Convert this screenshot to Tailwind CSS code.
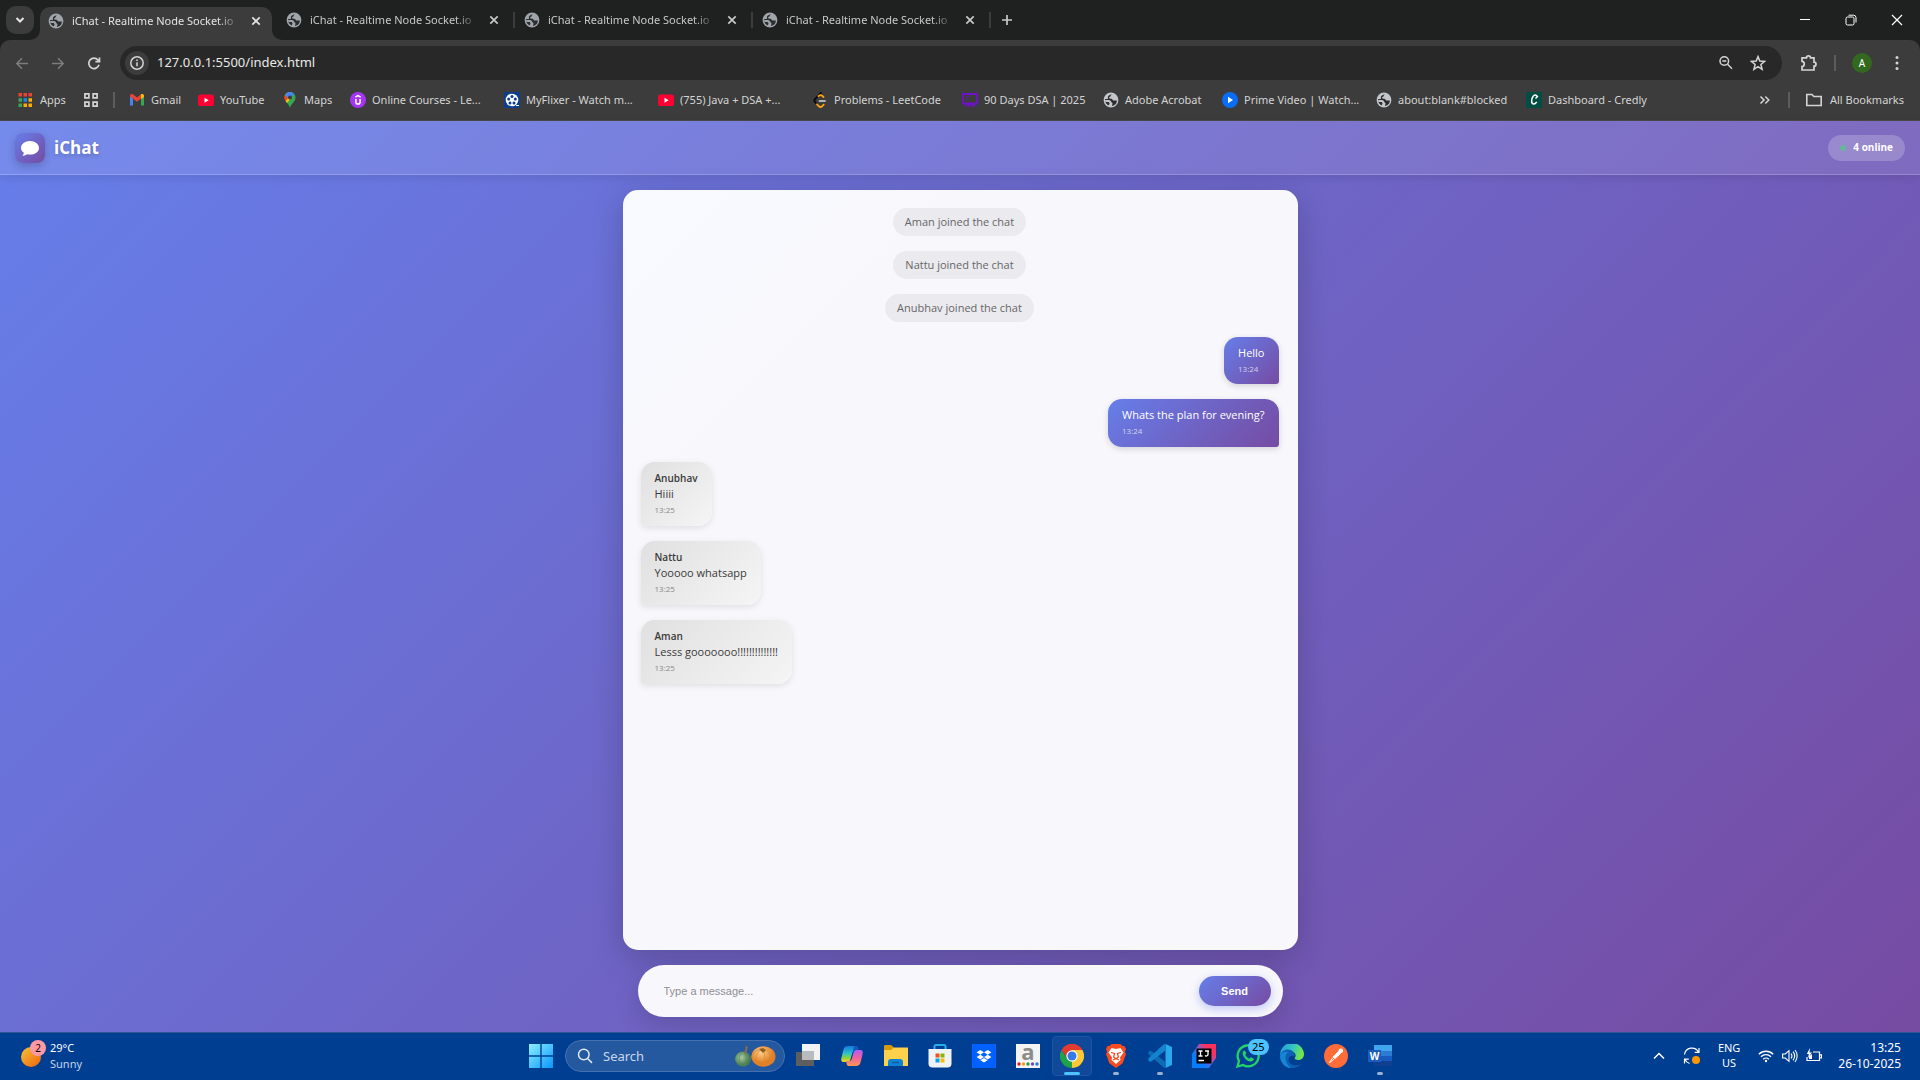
<!DOCTYPE html>
<html lang="en">
<head>
<meta charset="utf-8">
<meta name="viewport" content="width=device-width, initial-scale=1">
<title>iChat - Realtime Node Socket.io</title>
<script src="https://cdn.jsdelivr.net/npm/@tailwindcss/browser@4"></script>
</head>
<body class="flex min-h-screen flex-col overflow-x-hidden bg-[#1f2120] font-['Noto_Sans','Open_Sans',sans-serif]">

<!-- shared icons -->
<svg class="hidden" aria-hidden="true">
  <symbol id="globe" viewBox="0 0 16 16"><circle cx="8" cy="8" r="7.400" fill="currentColor"/><path d="M9.500 2.200c-1 .2-1.800.8-1.800 1.800 0 .8-1.600.6-1.600 1.700 0 1 1.200.9 2.200 1 1.500.1 1 1.700 2.400 1.700h3.200A6 6 0 0 1 9 13.900c-.2-.8.500-1.300.5-2.200 0-1.200-1.200-1-1.400-2.200C7.800 8.200 6 8 4.500 8H2.200c.1.700.3 1.400.5 2H5c1 0 1.500.7 1.500 1.500 0 .9-.7 1-.7 1.900A5.900 5.900 0 0 1 2.100 8c0-.4 0-.7.1-1l2.600.1c.6-1.200-.4-2 .5-3C6.200 3.100 7 2.700 9.500 2.200z" class="fill-[#2b2d2e]"/></symbol>
  <symbol id="close" viewBox="0 0 16 16"><path d="m4.300 4.300 7.400 7.400m0-7.400-7.400 7.400" fill="none" stroke="currentColor" stroke-width="1.700"/></symbol>
  <symbol id="youtube" viewBox="0 0 16 16"><rect y="2.500" width="16" height="11.500" rx="2.600" fill="#ff0033"/><path d="m6.500 5.700 4.200 2.500-4.200 2.500z" fill="#fff"/></symbol>
</svg>

<!-- tab strip -->
<header class="flex h-10 shrink-0 items-center text-[11px] text-[#c7c9c9]">
  <button aria-label="Search tabs" class="ml-1.5 flex size-7 items-center justify-center rounded-[10px] bg-[#3c3c3c] text-[#e6e6e6]">
    <svg class="size-3" viewBox="0 0 12 12" fill="none" stroke="currentColor" stroke-width="2"><path d="m2.500 4 3.500 3.500L9.500 4"/></svg>
  </button>
  <nav aria-label="Tabs" class="flex h-full flex-1 items-end pl-1.5">
    <div class="relative flex h-[33px] w-[232px] items-center rounded-t-[10px] bg-[#3c3c3c] pr-2 pb-[6px] pl-2 text-[#e3e3e3]">
      <svg class="absolute bottom-0 -left-2.5 size-2.5" viewBox="0 0 10 10"><path d="M10 0v10H0A10 10 0 0 0 10 0" fill="#3c3c3c"/></svg>
      <svg class="absolute -right-2.5 bottom-0 size-2.5" viewBox="0 0 10 10"><path d="M0 0v10h10A10 10 0 0 1 0 0" fill="#3c3c3c"/></svg>
      <svg class="size-4 shrink-0 text-[#9fa5ab]"><use href="#globe"/></svg>
      <a href="#" class="ml-2 w-[168px] overflow-hidden pt-px whitespace-nowrap [mask-image:linear-gradient(to_right,black_146px,transparent_168px)]">iChat - Realtime Node Socket.io</a>
      <button aria-label="Close tab" class="ml-2"><svg class="block size-4"><use href="#close"/></svg></button>
    </div>
    <div class="flex h-10 flex-1 items-center">
      <div class="flex w-[241px] items-center pl-[14px]">
        <svg class="size-4 shrink-0 text-[#9fa5ab]"><use href="#globe"/></svg>
        <a href="#" class="ml-2 w-[168px] overflow-hidden pt-px whitespace-nowrap [mask-image:linear-gradient(to_right,black_146px,transparent_168px)]">iChat - Realtime Node Socket.io</a>
        <button aria-label="Close tab" class="ml-2"><svg class="block size-4"><use href="#close"/></svg></button>
      </div>
      <div class="flex w-[238px] items-center border-[#3c3c3c]">
        <div class="h-4 w-0.5 bg-[#3c3c3c]"></div>
        <svg class="ml-[9px] size-4 shrink-0 text-[#9fa5ab]"><use href="#globe"/></svg>
        <a href="#" class="ml-2 w-[168px] overflow-hidden pt-px whitespace-nowrap [mask-image:linear-gradient(to_right,black_146px,transparent_168px)]">iChat - Realtime Node Socket.io</a>
        <button aria-label="Close tab" class="ml-2"><svg class="block size-4"><use href="#close"/></svg></button>
      </div>
      <div class="flex w-[238px] items-center">
        <div class="h-4 w-0.5 bg-[#3c3c3c]"></div>
        <svg class="ml-[9px] size-4 shrink-0 text-[#9fa5ab]"><use href="#globe"/></svg>
        <a href="#" class="ml-2 w-[168px] overflow-hidden pt-px whitespace-nowrap [mask-image:linear-gradient(to_right,black_146px,transparent_168px)]">iChat - Realtime Node Socket.io</a>
        <button aria-label="Close tab" class="ml-2"><svg class="block size-4"><use href="#close"/></svg></button>
      </div>
      <div class="h-4 w-0.5 bg-[#3c3c3c]"></div>
      <button aria-label="New tab" class="ml-2"><svg class="block size-4" viewBox="0 0 16 16" stroke="currentColor" stroke-width="1.700"><path d="M8 3v10M3 8h10"/></svg></button>
    </div>
  </nav>
  <div class="flex items-center text-white">
    <button aria-label="Minimize" class="flex w-[46px] justify-center"><svg class="size-3" viewBox="0 0 12 12" stroke="currentColor"><path d="M1 5.500h10"/></svg></button>
    <button aria-label="Restore" class="flex w-[46px] justify-center"><svg class="size-3" viewBox="0 0 12 12" fill="none" stroke="currentColor"><rect x="1" y="3" width="8" height="8" rx="1.500"/><path d="M3.500 1.200h5A2.500 2.500 0 0 1 11 3.500v5"/></svg></button>
    <button aria-label="Close window" class="flex w-[46px] justify-center"><svg class="size-3" viewBox="0 0 12 12" stroke="currentColor" stroke-width="1.200"><path d="m1 1 10 10M11 1 1 11"/></svg></button>
  </div>
</header>

<!-- address bar and bookmarks -->
<section class="flex h-[81px] shrink-0 flex-col rounded-t-[10px] border-b border-[#4b4b4b] bg-[#3c3c3c] text-[#d4d4d4]">
  <div class="flex h-[46px] items-center">
    <div class="flex w-[120px] items-center gap-5 pl-[14px]">
      <button aria-label="Back" class="text-[#7d7d7d]"><svg class="block size-4" viewBox="0 0 16 16" fill="none" stroke="currentColor" stroke-width="1.500"><path d="M14 8.500H3M8 3.200 2.800 8.500 8 13.800"/></svg></button>
      <button aria-label="Forward" class="text-[#7d7d7d]"><svg class="block size-4" viewBox="0 0 16 16" fill="none" stroke="currentColor" stroke-width="1.500"><path d="M2 8.500h11M8 3.200 13.200 8.500 8 13.800"/></svg></button>
      <button aria-label="Reload"><svg class="block size-4" viewBox="0 0 16 16" fill="none" stroke="currentColor" stroke-width="1.700"><path d="M13 9.800A5.200 5.200 0 1 1 12 5L13.300 6.500M13.500 2.600V6.700H9.400"/></svg></button>
    </div>
    <div class="flex h-[34px] flex-1 items-center rounded-full bg-[#282828] pr-4 pl-[5px]">
      <button aria-label="Site information" class="flex size-6 items-center justify-center rounded-full bg-[#3c3c3c]"><svg class="size-4" viewBox="0 0 16 16" fill="none" stroke="currentColor" stroke-width="1.500"><circle cx="8" cy="8" r="6.200"/><path d="M8 7.300v4M8 4.500v1.500"/></svg></button>
      <input aria-label="Address" value="127.0.0.1:5500/index.html" class="ml-2 min-w-0 flex-1 bg-transparent text-[13px] text-[#e8e8e8] outline-none">
      <button aria-label="Zoom" class="mr-4"><svg class="block size-4" viewBox="0 0 16 16" fill="none" stroke="currentColor" stroke-width="1.500"><circle cx="6.300" cy="6" r="4.300"/><path d="M9.600 9.300 14 13.700M4.300 6h4"/></svg></button>
      <button aria-label="Bookmark this page"><svg class="block size-4" viewBox="0 0 16 16" fill="none" stroke="currentColor" stroke-width="1.500"><path d="m8 1.600 1.800 4.500 4.800.3-3.700 3.100 1.200 4.800L8 11.700l-4.100 2.600 1.200-4.800L1.400 6.400l4.800-.3z"/></svg></button>
    </div>
    <div class="flex w-[138px] items-center pl-[18px]">
      <button aria-label="Extensions"><svg class="block size-[18px]" viewBox="0 0 18 18" fill="none" stroke="currentColor" stroke-width="1.700"><path d="M2 3.800h4.500a2 2 0 0 1 4 0H14v4.400a2 2 0 0 1 0 4V16H2v-3.500c3-.2 3-5 0-5.200z"/></svg></button>
      <div class="mx-4 h-4 w-0.5 bg-[#5c5c5c]"></div>
      <button aria-label="Profile" class="flex size-5 items-center justify-center rounded-full bg-[#33691e] text-[10px] text-white">A</button>
      <button aria-label="Menu" class="ml-[17px]"><svg class="block size-4" viewBox="0 0 16 16" fill="currentColor"><circle cx="8" cy="2.500" r="1.500"/><circle cx="8" cy="8" r="1.500"/><circle cx="8" cy="13.500" r="1.500"/></svg></button>
    </div>
  </div>
  <nav aria-label="Bookmarks" class="flex h-7 items-center text-[11px] whitespace-nowrap">
    <a href="#" class="flex w-[83px] items-center gap-2 pl-[18px]">
      <svg class="size-[14px] shrink-0" viewBox="0 0 14 14"><path d="M.5 0h3.500v3.500H.5zM5.500 0H9v3.500H5.500zM10.500 0H14v3.500h-3.500z" fill="#ea4335"/><path d="M.5 5.200H4v3.500H.5zM.5 10.500H4V14H.5z" fill="#34a853"/><path d="M5.500 5.200H9v3.500H5.500z" fill="#1a86fb"/><path d="M10.500 5.200H14v3.500h-3.500zM5.500 10.500H9V14H5.500zM10.500 10.500H14V14h-3.500z" fill="#fbaf04"/></svg>Apps</a>
    <button aria-label="Tab groups" class="flex w-[30px]"><svg class="size-4" viewBox="0 0 16 16" fill="none" stroke="currentColor" stroke-width="1.700"><path d="M1.900 1.900h4v4h-4zM10.100 1.900h4v4h-4zM1.900 10.100h4v4h-4zM10.100 10.100h4v4h-4z"/></svg></button>
    <div class="mr-[14px] h-4 w-0.5 bg-[#5c5c5c]"></div>
    <a href="#" class="flex w-[69px] items-center gap-1.5"><svg class="size-4 shrink-0" viewBox="0 0 16 16"><path d="M1 3v10.500h3V7z" fill="#4285f4"/><path d="M15 3v10.500h-3V7z" fill="#34a853"/><path d="M1 3.500C1 2 3 1.500 4 2.300L8 5.500l4-3.200v4.200L8 9.800 1 4.500z" fill="#ea4335"/><path d="M12 2.300c1-.8 3-.3 3 1.200V5l-3 2.300z" fill="#fbbc04"/></svg>Gmail</a>
    <a href="#" class="flex w-[84px] items-center gap-1.5"><svg class="size-4 shrink-0"><use href="#youtube"/></svg>YouTube</a>
    <a href="#" class="flex w-[68px] items-center gap-1.5"><svg class="size-4 shrink-0" viewBox="0 0 16 16"><path d="M8 0a5.500 5.500 0 0 1 5.500 5.500C13.500 9.500 9.500 11 8 16 6.500 11 2.500 9.500 2.500 5.500A5.500 5.500 0 0 1 8 0" fill="#34a853"/><path d="M2.900 3.500 6 6.500 3.600 9a5.500 5.500 0 0 1-.7-5.500" fill="#ea4335"/><path d="M3.600 9 10.500 1A5.500 5.500 0 0 0 3 3.300L8 7.500 5 11z" fill="#fbbc04"/><path d="M3 3.300A5.500 5.500 0 0 1 12.200 2L8 7 6 5.500z" fill="#4285f4"/><path d="m3 3.300 3 2.500-2.700 3A5.500 5.500 0 0 1 3 3.300" fill="#ea4335"/><circle cx="8" cy="5.500" r="2" fill="#3c3c3c"/></svg>Maps</a>
    <a href="#" class="flex w-[154px] items-center gap-1.5"><svg class="size-4 shrink-0" viewBox="0 0 16 16"><circle cx="8" cy="8" r="8" fill="#a435f0"/><path d="M5.900 7v3a2.100 2.100 0 0 0 4.200 0V7M5.300 5.200 8 3.600l2.700 1.600" fill="none" stroke="#fff" stroke-width="1.500"/></svg>Online Courses - Le...</a>
    <a href="#" class="flex w-[154px] items-center gap-1.5"><svg class="size-4 shrink-0" viewBox="0 0 16 16"><path d="M0 0h16v16H0z" fill="#0b3f8c"/><circle cx="8" cy="8" r="6.300" fill="#fff"/><path d="M12 13.500h3" stroke="#fff"/><g fill="#0b3f8c"><circle cx="8" cy="4.500" r="1.500"/><circle cx="4.700" cy="7" r="1.500"/><circle cx="11.300" cy="7" r="1.500"/><circle cx="6" cy="11" r="1.500"/><circle cx="10" cy="11" r="1.500"/></g></svg>MyFlixer - Watch m...</a>
    <a href="#" class="flex w-[154px] items-center gap-1.5"><svg class="size-4 shrink-0"><use href="#youtube"/></svg>(755) Java + DSA +...</a>
    <a href="#" class="flex w-[150px] items-center gap-1.5"><svg class="size-4 shrink-0" viewBox="0 0 16 16" fill="none" stroke-width="1.800" stroke-linecap="round"><path d="M9 1 3 7.200a2 2 0 0 0 0 2.800l2 2.300" stroke="#080808"/><path d="M6.500 4.200C8 2.800 9 2.800 10 3.700L11.500 5M5 12.300l2 2c1 1 2 1 3 0l1.700-1.700" stroke="#ffa116"/><path d="M7.500 9H13" stroke="#b3b3b3"/></svg>Problems - LeetCode</a>
    <a href="#" class="flex w-[141px] items-center gap-1.5"><svg class="size-4 shrink-0" viewBox="0 0 16 16" fill="none" stroke="#6f12c9" stroke-width="1.800"><path d="M1 2h14v9.500H1zM5 12l-1.500 3M11 12l1.500 3M7 12v2.500M9.500 12v2.500M0 2h16"/><path d="M4 4.800h1.500M4 7.500h1.500M7 5h1" stroke-width="1.200"/></svg>90 Days DSA | 2025</a>
    <a href="#" class="flex w-[119px] items-center gap-1.5"><svg class="size-4 shrink-0 text-[#c4c7c9]"><use href="#globe"/></svg>Adobe Acrobat</a>
    <a href="#" class="flex w-[154px] items-center gap-1.5"><svg class="size-4 shrink-0" viewBox="0 0 16 16"><circle cx="8" cy="8" r="8" fill="#0b6cf5"/><path d="m6 4.800 5 3.200-5 3.200z" fill="#fff"/></svg>Prime Video | Watch...</a>
    <a href="#" class="flex w-[150px] items-center gap-1.5"><svg class="size-4 shrink-0 text-[#c4c7c9]"><use href="#globe"/></svg>about:blank#blocked</a>
    <a href="#" class="flex items-center gap-1.5"><svg class="size-4 shrink-0" viewBox="0 0 16 16"><path d="M0 0h16v16H0z" fill="#004d43"/><path d="M11 5.500c.5-2.500-2-3.200-3.600-1.500-2.300 2.500-2.500 8 .3 8 1.300 0 2.300-1 3-2.200M9.500 6.500 12 4" fill="none" stroke="#fff" stroke-width="1.500"/></svg>Dashboard - Credly</a>
    <button aria-label="More bookmarks" class="ml-auto"><svg class="block size-4" viewBox="0 0 16 16" fill="none" stroke="currentColor" stroke-width="1.500"><path d="m3.500 4.500 3.500 3.500-3.500 3.500M8.300 4.500 11.800 8l-3.500 3.500"/></svg></button>
    <div class="mr-4 ml-[15px] h-4 w-0.5 bg-[#5c5c5c]"></div>
    <a href="#" class="flex items-center gap-2 pr-4"><svg class="size-4" viewBox="0 0 16 16" fill="none" stroke="currentColor" stroke-width="1.600"><path d="M.8 2.500h5.200l1.800 2h7.400v9H.8z"/></svg>All Bookmarks</a>
  </nav>
</section>

<!-- chat application -->
<div class="flex flex-1 flex-col bg-linear-[135deg,#667eea,#764ba2] font-['Open_Sans','Noto_Sans',sans-serif]">
  <div class="flex h-[54px] shrink-0 items-center border-b border-white/20 bg-white/10 px-[15px] shadow-[0_2px_10px_rgba(0,0,0,0.1)]">
    <div class="flex size-[30px] items-center justify-center rounded-lg bg-linear-[135deg,#667eea,#764ba2] shadow-[0_3px_8px_rgba(0,0,0,0.2)]">
      <svg class="size-5" viewBox="0 0 20 20" fill="#fff"><path d="M10 3c5 0 9 3 9 7s-4 6.600-9 6.600c-1 0-2-.1-2.900-.4-1 .8-2.600 1.600-4.600 1.600.8-.9 1.300-2 1.400-3C2 13.500 1 11.900 1 10c0-4 4-7 9-7"/></svg>
    </div>
    <h1 class="ml-[9px] text-[17px] font-bold text-white [text-shadow:0_2px_4px_rgba(0,0,0,0.2)]">iChat</h1>
    <div class="ml-auto flex h-[26px] items-center gap-[7px] rounded-full bg-white/20 px-3 text-[10px] font-bold text-white"><span class="size-1.5 rounded-full bg-[#69b598]"></span>4 online</div>
  </div>

  <main class="mx-auto flex w-full max-w-[675px] flex-1 flex-col gap-[15px] py-[15px]">
    <section aria-label="Messages" class="flex flex-1 flex-col items-start gap-[15px] rounded-[15px] bg-linear-[135deg,#f7faff,#f8f7fc_25%,#f8f7fc] py-[18px] pr-[19px] pl-[18px] text-[11px] leading-[16px] text-[#3a3a3a] shadow-[0_8px_32px_rgba(0,0,0,0.2)]">
      <p class="flex h-7 items-center self-center rounded-[14px] bg-black/5 px-3 text-[#666]">Aman joined the chat</p>
      <p class="flex h-7 items-center self-center rounded-[14px] bg-black/5 px-3 text-[#666]">Nattu joined the chat</p>
      <p class="flex h-7 items-center self-center rounded-[14px] bg-black/5 px-3 text-[#666]">Anubhav joined the chat</p>
      <article class="self-end rounded-[14px] rounded-br-[3px] bg-linear-[135deg,#667eea,#764ba2] px-[14px] pt-2 pb-[7px] text-white shadow-[0_2px_6px_rgba(0,0,0,0.15)]"><p>Hello</p><time class="block text-[8px] text-white/70">13:24</time></article>
      <article class="self-end rounded-[14px] rounded-br-[3px] bg-linear-[135deg,#667eea,#764ba2] px-[14px] py-2 text-white shadow-[0_2px_6px_rgba(0,0,0,0.15)]"><p>Whats the plan for evening?</p><time class="block text-[8px] text-white/70">13:24</time></article>
      <article class="rounded-[14px] rounded-bl-[3px] bg-linear-[135deg,#e0e0e0,#f5f5f5] px-[14px] py-2 shadow-[0_2px_6px_rgba(0,0,0,0.1)]"><h2 class="text-[10px] font-semibold">Anubhav</h2><p>Hiiii</p><time class="block text-[8px] text-[#888]">13:25</time></article>
      <article class="rounded-[14px] rounded-bl-[3px] bg-linear-[135deg,#e0e0e0,#f5f5f5] px-[14px] py-2 shadow-[0_2px_6px_rgba(0,0,0,0.1)]"><h2 class="text-[10px] font-semibold">Nattu</h2><p>Yooooo whatsapp</p><time class="block text-[8px] text-[#888]">13:25</time></article>
      <article class="rounded-[14px] rounded-bl-[3px] bg-linear-[135deg,#e0e0e0,#f5f5f5] px-[14px] py-2 shadow-[0_2px_6px_rgba(0,0,0,0.1)]"><h2 class="text-[10px] font-semibold">Aman</h2><p>Lesss gooooooo!!!!!!!!!!!!!!</p><time class="block text-[8px] text-[#888]">13:25</time></article>
    </section>
    <form class="mx-[15px] flex h-[52px] shrink-0 items-center rounded-full bg-[#f8f7fc] pr-3 pl-[26px] shadow-[0_8px_24px_rgba(0,0,0,0.15)]">
      <input aria-label="Message" placeholder="Type a message..." class="min-w-0 flex-1 bg-transparent font-['Liberation_Sans',sans-serif] text-[11px] outline-none placeholder:text-[#8e8e93]">
      <button type="button" class="h-[30px] w-[72px] rounded-full bg-linear-[135deg,#667eea,#764ba2] font-['Liberation_Sans',sans-serif] text-[11px] font-bold text-white shadow-[0_3px_10px_rgba(102,126,234,0.4)]">Send</button>
    </form>
  </main>
</div>

<!-- taskbar -->
<footer class="grid h-12 shrink-0 grid-cols-[1fr_auto_1fr] items-center border-t border-[#2e5693] bg-[#003e92] pb-px text-[11px] leading-4 text-white">
  <div class="flex items-center pl-[19px]">
    <div class="relative size-6"><svg class="mt-[3px] ml-0.5 size-5" viewBox="0 0 20 20"><defs><linearGradient id="sun" x2="1" y2="1"><stop stop-color="#f6c33a"/><stop offset="1" stop-color="#f0620d"/></linearGradient></defs><circle cx="10" cy="10" r="10" fill="url(#sun)"/></svg><span class="absolute -top-1 left-[11px] flex size-4 items-center justify-center rounded-full bg-[#ff99a4] text-[10px] text-black">2</span></div>
    <p class="ml-[7px]">29°C<br><span class="text-[#c5d3e8]">Sunny</span></p>
  </div>

  <div class="flex items-center pl-[9px]">
    <button aria-label="Start" class="mr-3"><svg class="block size-6" viewBox="0 0 24 24"><defs><linearGradient id="win" x2="1" y2="1"><stop stop-color="#8af0ff"/><stop offset="1" stop-color="#0a95fb"/></linearGradient></defs><path d="M0 0h11.300v11.300H0zM12.700 0H24v11.300H12.700zM0 12.700h11.300V24H0zM12.700 12.700H24V24H12.700z" fill="url(#win)"/></svg></button>
    <label class="mr-[3px] flex h-8 w-[220px] items-center rounded-full border border-[#4470b0] bg-[#2459a0] pl-[11px]">
      <svg class="size-4 shrink-0" viewBox="0 0 16 16" fill="none" stroke="#dfe8f5" stroke-width="1.500"><circle cx="6.800" cy="6.500" r="5.300"/><path d="m10.600 10.500 4.400 4.400"/></svg>
      <input aria-label="Search" placeholder="Search" class="ml-2.5 w-32 min-w-0 flex-1 bg-transparent text-[13px] outline-none placeholder:text-[#c8d6ea]">
      <svg class="mr-2 h-[22px] w-[42px] shrink-0" viewBox="0 0 42 22"><defs><radialGradient id="pumpkin" cx=".4" cy=".3"><stop stop-color="#ffd28a"/><stop offset="1" stop-color="#e07f26"/></radialGradient><radialGradient id="gourd" cx=".4" cy=".4"><stop stop-color="#a9cba4"/><stop offset="1" stop-color="#4a7d52"/></radialGradient></defs><ellipse cx="9" cy="14" rx="8" ry="7.500" fill="url(#gourd)"/><path d="M10 8c1-2 1-4 2-7l2 .5c-1 3-1 5-2 7.500z" fill="#8b6a4e"/><path d="M8 7c-4 4-3 11 0 14M10 7c3 4 3 11 0 14" fill="none" stroke="#5a8f5f" stroke-width=".7"/><ellipse cx="29.500" cy="11.500" rx="12" ry="10.300" fill="url(#pumpkin)"/><path d="M27 5c-6 3-6 12-1 16M30 6c1 5 1 11 0 15M32 5c5 3 6 12 1 16M25 5c-5 1-8 5-7 9" fill="none" stroke="#de8631" stroke-width=".7"/><path d="m25 4 4-1 3 2-3 3z" fill="#8f5c24"/></svg>
    </label>
    <!-- task view -->
    <button aria-label="Task View" class="flex size-10 items-center justify-center"><svg class="size-6" viewBox="0 0 24 24"><path d="M0 8h18v14H0z" fill="#5e5e5e"/><path d="M6 0h18v16H6z" fill="#f1f3f5"/><path d="M6 7h12v9H6z" fill="#b9bcbf"/></svg></button>
    <!-- copilot -->
    <button aria-label="Copilot" class="ml-1 flex size-10 items-center justify-center"><svg class="size-6" viewBox="0 0 24 24"><defs><linearGradient id="cp1" x2="0" y2="1"><stop stop-color="#1479dc"/><stop offset=".45" stop-color="#2ac2cf"/><stop offset=".75" stop-color="#8fd43c"/><stop offset="1" stop-color="#ffd02a"/></linearGradient><linearGradient id="cp2" x2="0" y2="1"><stop stop-color="#b15cf5"/><stop offset=".5" stop-color="#f261a0"/><stop offset="1" stop-color="#ff9a50"/></linearGradient></defs><path d="M8 2h7c2 0 2 1 2.500 2.500L18 7h-3c-2 0-2.500 1-3 3l-1.500 5c-.5 2-1.500 3-3.500 3H4c-3 0-3-2-2.500-4.500l2-8C4 3.500 5.500 2 8 2" fill="url(#cp1)"/><path d="M14 2h2c1 0 2 1 2.300 2.500L19 7h-3c-2 0-2.500 1-3 3l-1 2z" fill="#1357c2"/><path d="M16 22H9c-2 0-2-1-2.500-2.500L6 17h3c2 0 2.500-1 3-3l1.500-5c.5-2 1.500-3 3.500-3h3c3 0 3 2 2.500 4.500l-2 8C20 20.500 18.500 22 16 22" fill="url(#cp2)"/></svg></button>
    <!-- explorer -->
    <button aria-label="File Explorer" class="ml-1 flex size-10 items-center justify-center"><svg class="size-6" viewBox="0 0 24 24"><path d="M0 2.500C0 1.500.5 1 1.500 1H7l3 2.500V7H0z" fill="#d89b08"/><path d="M0 6h7l3-2.500h14V22H0z" fill="#ffd04b"/><path d="M4 22v-4a3 3 0 0 1 3-3h9a3 3 0 0 1 3 3v4z" fill="#0b84d8"/><path d="M8 18.500h7" stroke="#0c5e9e" stroke-width="1.500"/></svg></button>
    <!-- store -->
    <button aria-label="Microsoft Store" class="ml-1 flex size-10 items-center justify-center"><svg class="size-6" viewBox="0 0 24 24"><path d="M6.500 7V2.500C6.500 1.500 7 1 8 1h8c1 0 1.500.5 1.500 1.500V7" fill="none" stroke="#24aef0" stroke-width="2"/><path d="M.5 5h23v14.500a4 4 0 0 1-4 4h-15a4 4 0 0 1-4-4z" fill="#eff3f6"/><path d="M7.500 9.500h4v4h-4z" fill="#f25022"/><path d="M12.500 9.500h4v4h-4z" fill="#7fba00"/><path d="M7.500 14.500h4v4h-4z" fill="#00a4ef"/><path d="M12.500 14.500h4v4h-4z" fill="#ffb900"/></svg></button>
    <!-- dropbox -->
    <button aria-label="Dropbox" class="ml-1 flex size-10 items-center justify-center"><svg class="size-6" viewBox="0 0 24 24"><path d="M0 0h24v24H0z" fill="#0061fe"/><path d="m8.300 6 3.700 2.300-3.700 2.400-3.700-2.400zM15.700 6l3.700 2.300-3.700 2.400L12 8.300zM8.300 10.700l3.700 2.300-3.700 2.400L4.600 13zM15.700 10.700l3.700 2.300-3.700 2.400L12 13zM12 14l3.600 2.300L12 18.500l-3.600-2.200z" fill="#fff"/></svg></button>
    <!-- amazon -->
    <button aria-label="Amazon" class="ml-1 flex size-10 items-center justify-center"><svg class="size-6 overflow-visible" viewBox="0 0 24 24"><path d="M0 0h24v24H0z" fill="#f4f4f4"/><text x="12" y="15.500" text-anchor="middle" font-family="Open Sans, sans-serif" font-size="22" font-weight="700" fill="#8b8b8b">a</text><circle cx="3" cy="20" r="1.700" fill="#e21b2d"/><circle cx="7.500" cy="20" r="1.700" fill="#f59a1b"/><circle cx="12" cy="20" r="1.700" fill="#21a24a"/><circle cx="16.500" cy="20" r="1.700" fill="#8140c0"/><circle cx="21" cy="20" r="1.700" fill="#1c7fd6"/></svg></button>
    <!-- chrome -->
    <button aria-label="Chrome" class="relative ml-1 flex size-10 items-center justify-center rounded border border-[#1d539f] bg-[#11499a]"><svg class="size-6" viewBox="0 0 24 24"><path d="M12 12 1.600 6A12 12 0 0 1 22.400 6z" fill="#e33b2e"/><path d="M12 12 22.400 6A12 12 0 0 1 12 24z" fill="#fcc934"/><path d="M12 24A12 12 0 0 1 1.600 6l5.600 9 6 3z" fill="#1ea446"/><path d="M12 6h10.400L17 15l-5 9z" fill="#fcc934"/><path d="M1.600 6A12 12 0 0 1 22.400 6H12L7 14z" fill="#e33b2e"/><circle cx="12" cy="12" r="5.700" fill="#fff"/><circle cx="12" cy="12" r="4.500" fill="#357ae8"/></svg><span class="absolute bottom-0 h-[3px] w-4 rounded-full bg-[#4cc2ff]"></span></button>
    <!-- brave -->
    <button aria-label="Brave" class="relative ml-1 flex size-10 items-center justify-center"><svg class="size-6" viewBox="0 0 24 24"><path d="m7.500 0h9l2 2h2L22 5l-1 3 1 2-3.500 9.500L12 24l-6.500-4.500L2 10l1-2-1-3 1.500-3h2z" fill="#fb4a1d"/><path d="m7.500 4 4.500 1 4.500-1 3 4.500-3.500 5 .5 2.500-4.500 4-4.500-4 .5-2.500-3.500-5z" fill="#fff"/><path d="m7 8.500 3.500 1-.8 3.500L12 15l2.300-2-.8-3.500 3.500-1M9 16l3-1.500 3 1.500" fill="none" stroke="#fb4a1d" stroke-width="1.300"/></svg><span class="absolute bottom-px h-[3px] w-1.5 rounded-full bg-[#9bb0d3]"></span></button>
    <!-- vs code -->
    <button aria-label="Visual Studio Code" class="relative ml-1 flex size-10 items-center justify-center"><svg class="size-6" viewBox="0 0 24 24"><path d="M17.500 0 24 3v18l-6.500 3z" fill="#2ba7ee"/><path d="M17.500 24v-6L2.500 6.500.3 8v2L15.500 23.500z" fill="#0d6cb5"/><path d="M17.500 0v6.500L2.500 18 .3 16.500v-2L15.500.5z" fill="#1284cf"/></svg><span class="absolute bottom-px h-[3px] w-1.5 rounded-full bg-[#9bb0d3]"></span></button>
    <!-- intellij -->
    <button aria-label="IntelliJ IDEA" class="ml-1 flex size-10 items-center justify-center"><svg class="size-6" viewBox="0 0 24 24"><defs><linearGradient id="ij" x1="0" y1="1" x2="1" y2="0"><stop offset=".3" stop-color="#087cfa"/><stop offset=".55" stop-color="#8a5ad0"/><stop offset=".75" stop-color="#fe315d"/></linearGradient></defs><path d="M7 0h17v14l-7 10H0V10z" fill="url(#ij)"/><path d="M4.500 4.500h15v15h-15z" fill="#000"/><path d="M6.500 7h4M8.500 7v5M6.500 12h4M13 7h4M16 7v3.500c0 1.500-2 2-3 1M6.500 16.500H12" fill="none" stroke="#fff" stroke-width="1.300"/></svg></button>
    <!-- whatsapp -->
    <button aria-label="WhatsApp" class="relative ml-1 flex size-10 items-center justify-center"><svg class="size-6" viewBox="0 0 24 24"><path d="M1.500 22.500 3 17A10.500 10.500 0 1 1 7 21z" fill="none" stroke="#25d366" stroke-width="2.300"/><path d="M8.500 6.500c-1.500.5-2.200 2-1.700 4 1 3.500 4 6.500 7.500 7 2 .2 3.500-1 3.500-2.800l-3-1.500-1.500 1.600c-2-.8-3.300-2.300-4-4L10.500 9z" fill="#25d366"/></svg><span class="absolute top-[3px] left-5 flex h-4 items-center rounded-full bg-[#4cc2ff] px-1 text-[11px] text-black">25</span></button>
    <!-- edge -->
    <button aria-label="Edge" class="ml-1 flex size-10 items-center justify-center"><svg class="size-6" viewBox="0 0 24 24"><defs><linearGradient id="eg" x2="1" y2=".3"><stop stop-color="#2497d8"/><stop offset=".55" stop-color="#32c4c9"/><stop offset="1" stop-color="#71e64b"/></linearGradient></defs><path d="M0 12A12 12 0 0 1 24 10c0 4-3 6-6 6-2 0-4-1-3-2.500 2-3-1-6.500-5-6C5 8 1 10 0 12" fill="url(#eg)"/><path d="M0 12c.5-4 4-6.500 8-6.500 5 0 8 4 6 7.500-1-2-5-1.500-5.500 2-.5 3 3 6.500 7.500 6.500 3 0 5-1 6.300-2.500C20 22 16 24 12 24A12 12 0 0 1 0 12" fill="#0f5fb5"/><path d="M0 12c1-3.500 5-5 8.500-4C4 10 4 19 11 24A12 12 0 0 1 0 12" fill="#1586d4"/></svg></button>
    <!-- postman -->
    <button aria-label="Postman" class="ml-1 flex size-10 items-center justify-center"><svg class="size-6" viewBox="0 0 24 24"><circle cx="12" cy="12" r="12" fill="#ff6c37"/><circle cx="16.800" cy="6.800" r="2.300" fill="#fff"/><path d="m14.500 7.500 2 2-5.500 5-2-1.500zM9 13.500 5 19M10.500 14.500 6 18.500" fill="#fff" stroke="#fff"/></svg></button>
    <!-- word -->
    <button aria-label="Word" class="relative ml-1 flex size-10 items-center justify-center"><svg class="size-6" viewBox="0 0 24 24"><path d="M6 1h18v6H6z" fill="#41a5ee"/><path d="M6 7h18v5H6z" fill="#2b7cd3"/><path d="M6 12h18v5H6z" fill="#185abd"/><path d="M6 17h18v5H6z" fill="#103f91"/><path d="M0 6h13v12H0z" fill="#1b5cbe"/><text x="6.500" y="15.500" text-anchor="middle" font-family="Open Sans, sans-serif" font-size="10" font-weight="700" fill="#fff">W</text></svg><span class="absolute bottom-px h-[3px] w-1.5 rounded-full bg-[#9bb0d3]"></span></button>
  </div>

  <div class="flex items-center justify-end pr-[19px] text-xs">
    <button aria-label="Hidden icons"><svg class="block size-3" viewBox="0 0 12 12" fill="none" stroke="currentColor" stroke-width="1.500"><path d="m1 8.500 5-5 5 5"/></svg></button>
    <button aria-label="Updates" class="ml-[18px]"><svg class="block size-[18px]" viewBox="0 0 18 18" fill="none" stroke="currentColor" stroke-width="1.200"><path d="M1.500 7.500A7.500 7.500 0 0 1 15.500 5M16 1v4.300h-4.300M6.500 16.500A7.500 7.500 0 0 1 2 12.500M1.500 16.500v-4.300h4.300"/><circle cx="13" cy="13" r="4" fill="#ff9800" stroke="none"/></svg></button>
    <p class="ml-[17px] text-center text-[11px]">ENG<br>US</p>
    <button aria-label="Network and sound" class="ml-[18px] flex gap-2"><svg class="size-4" viewBox="0 0 16 16" fill="none" stroke="currentColor" stroke-width="1.300"><path d="M.8 6.300a10 10 0 0 1 14.400 0M3 8.800a7 7 0 0 1 10 0M5.200 11.200a4 4 0 0 1 5.600 0"/><circle cx="8" cy="13" r="1.200" fill="currentColor" stroke="none"/></svg><svg class="size-4" viewBox="0 0 16 16" fill="none" stroke="currentColor" stroke-width="1.100"><path d="M.6 6v4h2.700L7 13.300V2.700L3.300 6zM9 5.500a4 4 0 0 1 0 5M11 3.700a7 7 0 0 1 0 8.600M13 2a9.500 9.500 0 0 1 0 12"/></svg><svg class="size-4" viewBox="0 0 16 16" fill="none" stroke="currentColor" stroke-width="1.200"><path d="M7 4h6.500v8.500H1V9M14 6.800h1.500v3H14"/><path d="M4 0 .8 6h2L2 10l4-5.500H3.500zM3 11V8.500L6 6v5z" fill="currentColor" stroke="none"/></svg></button>
    <p class="ml-4 text-right">13:25<br>26-10-2025</p>
  </div>
</footer>
</body>
</html>
